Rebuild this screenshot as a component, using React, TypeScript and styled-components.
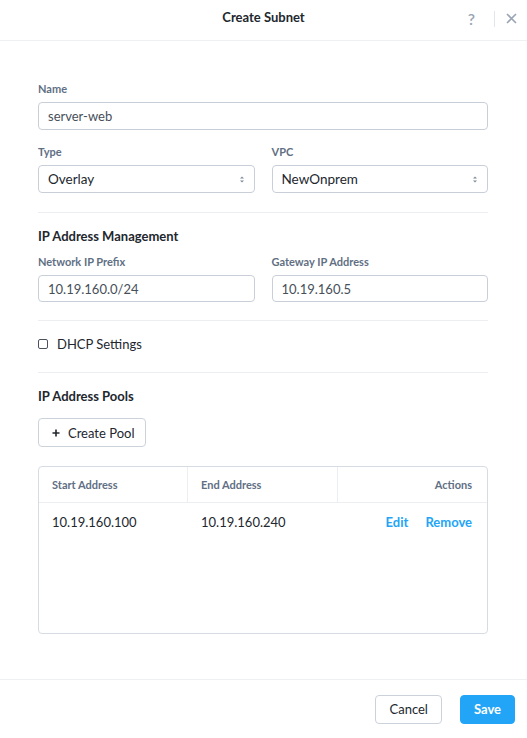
import React from 'react';
import styled, { createGlobalStyle } from 'styled-components';

const GlobalStyle = createGlobalStyle`
  html, body {
    margin: 0;
    padding: 0;
    background: #ffffff;
  }
  body {
    font-family: Lato, "Open Sans", Arial, sans-serif;
    color: #22272e;
  }
  * { box-sizing: border-box; }
`;

const Modal = styled.div`
  width: 527px;
  height: 738px;
  display: flex;
  flex-direction: column;
  background: #fff;
`;

const Header = styled.div`
  height: 41px;
  flex: none;
  border-bottom: 1px solid #eef0f3;
  display: flex;
  align-items: center;
  justify-content: center;
  position: relative;
`;

const Title = styled.div`
  font-size: 13px;
  font-weight: 700;
  color: #22272e;
  margin-top: -6px;
`;

const HeaderIcons = styled.div`
  position: absolute;
  right: 10px;
  top: 9px;
  display: flex;
  align-items: center;
  gap: 11px;
  color: #9aa5b5;
  font-size: 16px;
`;

const HelpMark = styled.span`
  margin-right: 8px;
  font-weight: 600;
`;

const IconDivider = styled.span`
  width: 1px;
  height: 16px;
  background: #e2e6ec;
`;

const Body = styled.div`
  flex: 1;
  padding: 41px 39px 0 38px;
  display: flex;
  flex-direction: column;
`;

const Label = styled.div`
  font-size: 11px;
  font-weight: 700;
  color: #5f6f84;
  margin-bottom: 6px;
  line-height: 14px;
`;

const Field = styled.div`
  display: flex;
  flex-direction: column;
  flex: 1;
`;

const Row = styled.div<{ $mt?: number }>`
  display: flex;
  gap: 17px;
  margin-top: ${({ $mt }) => $mt ?? 0}px;
`;

const Input = styled.div<{ $h?: number }>`
  height: ${({ $h }) => $h ?? 28}px;
  border: 1px solid #c9cfd8;
  border-radius: 4px;
  padding: 0 9px;
  display: flex;
  align-items: center;
  font-size: 13px;
  color: #474f5a;
`;

const Select = styled(Input)`
  justify-content: space-between;
  color: #22272e;
  font-size: 13.5px;
`;

const Divider = styled.div<{ $mt: number; $mb: number }>`
  height: 1px;
  background: #eceef2;
  margin-top: ${({ $mt }) => $mt}px;
  margin-bottom: ${({ $mb }) => $mb}px;
`;

const SectionTitle = styled.div`
  font-size: 13px;
  font-weight: 700;
  color: #22272e;
  line-height: 16px;
`;

const CheckRow = styled.label`
  display: flex;
  align-items: center;
  gap: 9px;
  font-size: 13px;
  color: #22272e;
  height: 18px;
`;

const CheckBox = styled.span`
  width: 10px;
  height: 10px;
  border: 1.3px solid #4a5260;
  border-radius: 2px;
`;

const OutlineButton = styled.button`
  height: 29px;
  padding: 0 11px 0 13px;
  border: 1px solid #ccd2da;
  border-radius: 4px;
  background: #fff;
  font-family: inherit;
  font-size: 13px;
  color: #22272e;
  display: inline-flex;
  align-items: center;
  gap: 8px;
`;

const PoolButtonWrap = styled.div`
  margin-top: 14px;
  display: flex;
`;

const Table = styled.div`
  margin-top: 19px;
  height: 168px;
  border: 1px solid #d7dce3;
  border-radius: 4px;
`;

const TableHead = styled.div`
  display: grid;
  grid-template-columns: 149px 150px 1fr;
  height: 36px;
  border-bottom: 1px solid #eceef2;
`;

const HeadCell = styled.div<{ $right?: boolean; $last?: boolean }>`
  font-size: 11px;
  font-weight: 700;
  color: #5f6f84;
  display: flex;
  align-items: center;
  justify-content: ${({ $right }) => ($right ? 'flex-end' : 'flex-start')};
  padding: 0 15px 0 13px;
  border-right: ${({ $last }) => ($last ? 'none' : '1px solid #eceef2')};
`;

const TableRow = styled.div`
  display: grid;
  grid-template-columns: 149px 150px 1fr;
  height: 38px;
`;

const Cell = styled.div`
  font-size: 13px;
  color: #22272e;
  display: flex;
  align-items: center;
  padding: 0 13px;
`;

const ActionCell = styled.div`
  display: flex;
  align-items: center;
  justify-content: flex-end;
  gap: 17px;
  padding-right: 15px;
`;

const LinkText = styled.span`
  font-size: 13px;
  font-weight: 700;
  color: #22a5f7;
`;

const Footer = styled.div`
  height: 59px;
  flex: none;
  border-top: 1px solid #eef0f3;
  display: flex;
  align-items: center;
  justify-content: flex-end;
  gap: 18px;
  padding: 0 12px 0 0;
`;

const Button = styled.button<{ $primary?: boolean }>`
  height: 29px;
  padding: 0 13px;
  border-radius: 4px;
  font-family: inherit;
  font-size: 13px;
  font-weight: ${({ $primary }) => ($primary ? 700 : 400)};
  border: 1px solid ${({ $primary }) => ($primary ? '#22a5f7' : '#ccd2da')};
  background: ${({ $primary }) => ($primary ? '#22a5f7' : '#fff')};
  color: ${({ $primary }) => ($primary ? '#fff' : '#22272e')};
`;

const Spacer = styled.div`
  flex: 1;
`;

const Arrows = () => (
  <svg width="6" height="9" viewBox="0 0 6 9">
    <path d="M1 3.5 L3 1.5 L5 3.5 Z M1 5.5 L3 7.5 L5 5.5 Z" fill="#7f8a99" />
  </svg>
);

const CloseIcon = () => (
  <svg width="11" height="11" viewBox="0 0 11 11">
    <path d="M1 1 L10 10 M10 1 L1 10" stroke="#9aa5b5" strokeWidth="1.6" />
  </svg>
);

const PlusIcon = () => (
  <svg width="8" height="8" viewBox="0 0 8 8">
    <path d="M4 0.5 V7.5 M0.5 4 H7.5" stroke="#22272e" strokeWidth="1.6" />
  </svg>
);

export default function App() {
  return (
    <>
      <GlobalStyle />
      <Modal>
        <Header>
          <Title>Create Subnet</Title>
          <HeaderIcons>
            <HelpMark>?</HelpMark>
            <IconDivider />
            <CloseIcon />
          </HeaderIcons>
        </Header>
        <Body>
          <Field>
            <Label>Name</Label>
            <Input>server-web</Input>
          </Field>
          <Row $mt={15}>
            <Field>
              <Label>Type</Label>
              <Select>
                Overlay
                <Arrows />
              </Select>
            </Field>
            <Field>
              <Label>VPC</Label>
              <Select>
                NewOnprem
                <Arrows />
              </Select>
            </Field>
          </Row>
          <Divider $mt={19} $mb={15} />
          <SectionTitle>IP Address Management</SectionTitle>
          <Row $mt={11}>
            <Field>
              <Label>Network IP Prefix</Label>
              <Input $h={27}>10.19.160.0/24</Input>
            </Field>
            <Field>
              <Label>Gateway IP Address</Label>
              <Input $h={27}>10.19.160.5</Input>
            </Field>
          </Row>
          <Divider $mt={18} $mb={14} />
          <CheckRow>
            <CheckBox />
            DHCP Settings
          </CheckRow>
          <Divider $mt={19} $mb={15} />
          <SectionTitle>IP Address Pools</SectionTitle>
          <PoolButtonWrap>
            <OutlineButton>
              <PlusIcon />
              Create Pool
            </OutlineButton>
          </PoolButtonWrap>
          <Table>
            <TableHead>
              <HeadCell>Start Address</HeadCell>
              <HeadCell>End Address</HeadCell>
              <HeadCell $right $last>Actions</HeadCell>
            </TableHead>
            <TableRow>
              <Cell>10.19.160.100</Cell>
              <Cell>10.19.160.240</Cell>
              <ActionCell>
                <LinkText>Edit</LinkText>
                <LinkText>Remove</LinkText>
              </ActionCell>
            </TableRow>
          </Table>
          <Spacer />
        </Body>
        <Footer>
          <Button>Cancel</Button>
          <Button $primary>Save</Button>
        </Footer>
      </Modal>
    </>
  );
}
